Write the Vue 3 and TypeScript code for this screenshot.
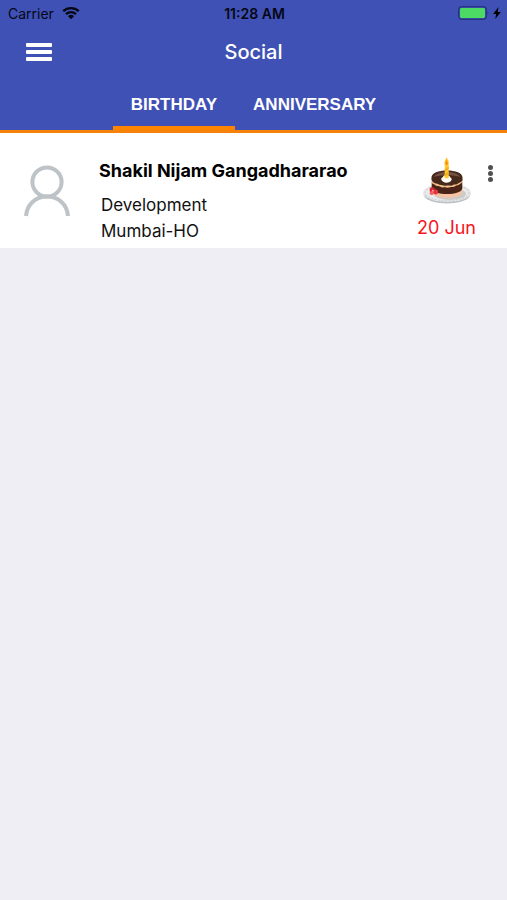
<script setup lang="ts">
import { ref } from 'vue'

type Tab = 'Birthday' | 'Anniversary'

interface Person {
  name: string
  department: string
  location: string
  date: string
}

const tabs: Tab[] = ['Birthday', 'Anniversary']
const active = ref<Tab>('Birthday')

const people: Record<Tab, Person[]> = {
  Birthday: [
    {
      name: 'Shakil Nijam Gangadhararao',
      department: 'Development',
      location: 'Mumbai-HO',
      date: '20 Jun',
    },
  ],
  Anniversary: [],
}
</script>

<template>
  <div class="screen">
    <header class="top">
      <div class="status">
        <div class="carrier">
          <span>Carrier</span>
          <svg class="wifi" viewBox="0 0 18 14" aria-hidden="true">
            <path d="M1.2 5.2a11.2 11.2 0 0 1 15.6 0M4 8.2a7.2 7.2 0 0 1 10 0" fill="none" stroke="currentColor" stroke-width="2.3" />
            <path d="M9 13.2 6 10.2a4.3 4.3 0 0 1 6 0z" fill="currentColor" />
          </svg>
        </div>
        <span class="time">11:28 AM</span>
        <div class="power">
          <svg class="battery" viewBox="0 0 32 14" aria-hidden="true">
            <rect x="0.7" y="0.7" width="27.6" height="12.6" rx="3" fill="none" stroke="#25347c" stroke-width="1.3" />
            <rect x="2" y="2" width="25" height="10" rx="1.4" fill="#4cd964" />
            <path d="M29.6 5q1.8 2 0 4z" fill="#25347c" />
          </svg>
          <svg class="bolt" viewBox="0 0 8 12" aria-hidden="true">
            <path d="M5.5 0 .2 6.9h3L2.200 12 7.900 5H4.700z" fill="#000" />
          </svg>
        </div>
      </div>

      <div class="bar">
        <button class="menu" type="button" aria-label="Menu">
          <span></span><span></span><span></span>
        </button>
        <h1 class="title">Social</h1>
      </div>

      <nav class="tabs" role="tablist">
        <button
          v-for="tab in tabs"
          :key="tab"
          type="button"
          role="tab"
          class="tab"
          :class="{ active: tab === active }"
          :aria-selected="tab === active"
          @click="active = tab"
        >
          {{ tab }}
        </button>
      </nav>
    </header>

    <main>
      <article v-for="person in people[active]" :key="person.name" class="card">
        <svg class="avatar" viewBox="0 0 48 52" aria-hidden="true">
          <g fill="none" stroke="#bdc3c7" stroke-width="4">
            <circle cx="24" cy="17" r="14.6" />
            <path d="M3 51C3.800 39.500 12.500 31.600 24 31.600S44.200 39.500 45 51" />
          </g>
        </svg>
        <div class="info">
          <h2 class="name">{{ person.name }}</h2>
          <p class="line">{{ person.department }}</p>
          <p class="line">{{ person.location }}</p>
        </div>
        <div class="event">
          <svg class="cake" viewBox="0 0 50 50" aria-hidden="true">
            <ellipse cx="25" cy="37" rx="23.500" ry="9.500" fill="#bfc2c4" />
            <ellipse cx="25" cy="35.500" rx="24" ry="9.300" fill="#e9ebec" />
            <ellipse cx="25" cy="35.700" rx="22" ry="8" fill="none" stroke="#cdd0d2" stroke-width="1.200" stroke-dasharray="2 1.500" />
            <ellipse cx="28" cy="37" rx="16" ry="6" fill="#cfcac6" />
            <path d="M9.700 30v4.500c0 8 30.600 8 30.600 0V30z" fill="#f8c3a2" />
            <path d="M9.700 25v6c0 8 30.600 8 30.600 0v-6z" fill="#4a2517" />
            <path d="M9.500 21v4.500c1 2 2.500 1.200 4 2.700s3.500.3 5 1.600 4 0 6 .7 4-.6 6-.5 3-1.600 5-1.800 3-2 4.800-2.700V21z" fill="#f4bd8c" />
            <path d="M9.500 20.500c0-4.500 7-7 15.500-7s15.500 2.500 15.500 7v3c-1 2-3 1.500-4.500 3s-3.500.4-5 1.600-4 0-6 .5-4-.8-6-.7-3-1.500-5-1.500-4-2-4.500-3.900z" fill="#47291c" />
            <path d="M12 20c1.500-3.500 7.500-5 13-5s11.500 1.500 13 5c-5-2.200-21-2.200-26 0z" fill="#745342" />
            <path d="M19.300 22.500c-.5-1.700 1.700-1.800 2-3.200s2.700-1.200 3.400-.7 2.800-.2 3.300 1.200 2.300 1.400 1.500 3.200-2.700 2.700-5 2.700-4.700-1.500-5.200-3.200z" fill="#fffef6" />
            <path d="M22.700 6.500h4v13.700c0 1.600-4 1.600-4 0z" fill="#ffca2b" />
            <path d="m22.700 12.500 4-3v2.200l-4 3zm0 5 4-3v2.200l-4 3z" fill="#f5a91c" />
            <path d="M24.600 0c.7 2.500 2.400 3.700 2.100 6-.3 3.200-4 3.200-4.300 0C22.200 4 24.100 2.700 24.600 0z" fill="#ffbd20" />
            <path d="M24.600 3.500c.3 1.500 1.300 2 1 3.300-.3 1.300-1.800 1.300-2 0-.2-1.200.9-1.800 1-3.300z" fill="#f08318" />
            <circle cx="10.300" cy="33" r="2.700" fill="#db2632" />
            <circle cx="13.600" cy="35" r="2.500" fill="#e8343d" />
            <circle cx="9.600" cy="36.200" r="1.900" fill="#f2616a" />
            <circle cx="10.800" cy="33.700" r=".9" fill="#ffb4b0" />
          </svg>
          <time class="date">{{ person.date }}</time>
        </div>
        <button class="more" type="button" aria-label="More options">
          <span></span><span></span><span></span>
        </button>
      </article>
    </main>
  </div>
</template>

<style>
body {
  background: #eeeef4;
}
</style>

<style scoped>
.screen {
  min-height: 100vh;
  background: #eeeef4;
  color: #111;
  font-family: Inter, "Liberation Sans", sans-serif;
}

button {
  margin: 0;
  border: 0;
  background: none;
  cursor: pointer;
}

.top {
  background: #3f51b5;
  border-bottom: 3px solid #f6820c;
}

.status {
  display: grid;
  grid-template-columns: 1fr auto 1fr;
  align-items: center;
  height: 26px;
  padding: 0 6px 0 8px;
  color: #050714;
  font-size: 14px;
}

.carrier {
  display: flex;
  align-items: center;
  gap: 8px;
}

.wifi {
  width: 18px;
  height: 14px;
}

.time {
  font-weight: 600;
}

.power {
  display: flex;
  align-items: center;
  justify-content: flex-end;
  gap: 3px;
}

.battery {
  width: 32px;
  height: 14px;
}

.bolt {
  width: 8px;
  height: 12px;
}

.bar {
  display: grid;
  grid-template-columns: 1fr auto 1fr;
  align-items: center;
  height: 52px;
  padding: 0 26px;
}

.menu {
  display: flex;
  flex-direction: column;
  gap: 3px;
  width: 26px;
  padding: 0;
}

.menu span {
  height: 4px;
  border-radius: 1px;
  background: #fff;
}

.title {
  margin: 0;
  color: #fff;
  font-size: 20px;
  font-weight: 500;
}

.tabs {
  display: flex;
  justify-content: center;
}

.tab {
  height: 52px;
  padding: 6px 18px 0;
  border-bottom: 4px solid transparent;
  color: #fff;
  font-family: "Liberation Sans", Arial, sans-serif;
  font-size: 17px;
  font-weight: 700;
  text-transform: uppercase;
}

.tab.active {
  border-bottom-color: #ff8500;
}

.card {
  display: flex;
  align-items: flex-start;
  padding: 24px 10px 4px 23px;
  background: #fff;
}

.avatar {
  width: 48px;
  height: 52px;
  margin-top: 8px;
}

.info {
  flex: 1;
  padding-left: 28px;
}

.name {
  margin: 0 0 7px;
  color: #000;
  font-size: 18px;
  font-weight: 700;
  line-height: 28px;
}

.line {
  margin: 0;
  padding-left: 2px;
  font-size: 17px;
  line-height: 26px;
}

.event {
  display: flex;
  flex-direction: column;
  align-items: center;
  gap: 9px;
}

.cake {
  width: 50px;
  height: 50px;
}

.date {
  color: #f9141c;
  font-size: 18px;
  line-height: 24px;
}

.more {
  display: flex;
  flex-direction: column;
  gap: 1px;
  margin: 8px 4px 0 12px;
  padding: 0;
}

.more span {
  width: 5px;
  height: 5px;
  border-radius: 50%;
  background: #505050;
}
</style>
